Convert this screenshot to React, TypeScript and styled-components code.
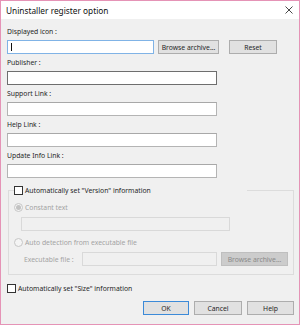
import React from "react";
import styled, { createGlobalStyle, css } from "styled-components";

const GlobalStyle = createGlobalStyle`
  html, body { margin: 0; padding: 0; background: #ffffff; }
  * { box-sizing: border-box; }
`;

const FONT = `"Noto Sans", "Open Sans", "Liberation Sans", sans-serif`;

const Window = styled.div`
  width: 300px;
  height: 325px;
  border: 1px solid #e593b6;
  background: #f0f0f0;
  display: flex;
  flex-direction: column;
  font-family: ${FONT};
  font-size: 6.8px;
  color: #262626;
`;

const TitleBar = styled.div`
  height: 18px;
  background: #ffffff;
  display: flex;
  align-items: center;
  justify-content: space-between;
  padding: 0 6px 0 5px;
  font-size: 8.3px;
  color: #111;
`;

const Body = styled.div`
  padding: 4px 5px 0 6px;
  display: flex;
  flex-direction: column;
`;

const FieldLabel = styled.div`
  height: 17px;
  line-height: 11px;
  padding-top: 3px;
  white-space: nowrap;
`;

const Edit = styled.div<{ $w: number; $tone?: "focus" | "dark" | "normal" | "disabled" }>`
  width: ${(p) => p.$w}px;
  height: 14px;
  flex: none;
  position: relative;
  background: #ffffff;
  border: 1px solid #b4b4b4;
  border-top-color: #a8a8a8;
  ${(p) =>
    p.$tone === "focus" &&
    css`
      border-color: #80b3e6;
    `}
  ${(p) =>
    p.$tone === "dark" &&
    css`
      border-color: #6e6e6e;
    `}
  ${(p) =>
    p.$tone === "disabled" &&
    css`
      background: #f0f0f0;
      border-color: #d9d9d9;
    `}
`;

const Caret = styled.span`
  position: absolute;
  left: 3px;
  top: 2px;
  width: 1px;
  height: 8px;
  background: #111;
`;

const Row = styled.div<{ $gap?: number; $mt?: number }>`
  display: flex;
  align-items: center;
  gap: ${(p) => p.$gap ?? 0}px;
  margin-top: ${(p) => p.$mt ?? 0}px;
`;

const Button = styled.div<{ $w: number; $ml?: number; $default?: boolean; $disabled?: boolean }>`
  width: ${(p) => p.$w}px;
  margin-left: ${(p) => p.$ml ?? 0}px;
  height: 14px;
  flex: none;
  border: 1px solid #adadad;
  background: #e1e1e1;
  display: flex;
  align-items: center;
  justify-content: center;
  white-space: nowrap;
  color: #262626;
  ${(p) =>
    p.$default &&
    css`
      border-color: #3c8ad8;
    `}
  ${(p) =>
    p.$disabled &&
    css`
      background: #cccccc;
      border-color: #bfbfbf;
      color: #8a8a8a;
    `}
`;

const Group = styled.fieldset`
  margin: 7px 0 0 1px;
  width: 286px;
  padding: 0 5px 8px 5px;
  border: 1px solid #dcdcdc;
  min-width: 0;
`;

const Legend = styled.legend`
  padding: 0;
  width: 233px;
  height: 10px;
`;

const Check = styled.label`
  display: flex;
  align-items: center;
  gap: 2px;
  height: 10px;
  white-space: nowrap;
`;

const Box = styled.span`
  width: 9px;
  height: 9px;
  border: 1px solid #333333;
  background: #ffffff;
  flex: none;
`;

const Radio = styled.span<{ $checked?: boolean }>`
  width: 9px;
  height: 9px;
  border-radius: 50%;
  border: 1px solid #c6c6c6;
  background: #f4f4f4;
  flex: none;
  display: flex;
  align-items: center;
  justify-content: center;
  &::after {
    content: "";
    display: ${(p) => (p.$checked ? "block" : "none")};
    width: 5px;
    height: 5px;
    border-radius: 50%;
    background: #c2c2c2;
  }
`;

const DisabledText = styled.span`
  color: #a3a3a3;
`;

const Indent = styled.div<{ $ml: number; $mt: number }>`
  margin-left: ${(p) => p.$ml}px;
  margin-top: ${(p) => p.$mt}px;
  display: flex;
  align-items: center;
`;

const ExeLabel = styled.span`
  color: #a3a3a3;
  width: 62px;
  margin-left: 10px;
  white-space: nowrap;
`;

const Footer = styled.div`
  display: flex;
  justify-content: flex-end;
  gap: 5px;
  margin-top: 8px;
`;

const CloseIcon = () => (
  <svg width="8" height="8" viewBox="0 0 8 8">
    <path d="M0.5 0.5 L7.5 7.5 M7.5 0.5 L0.5 7.5" stroke="#333" strokeWidth="0.9" fill="none" />
  </svg>
);

export default function App() {
  return (
    <>
      <GlobalStyle />
      <Window>
        <TitleBar>
          <span>Uninstaller register option</span>
          <CloseIcon />
        </TitleBar>
        <Body>
          <FieldLabel>Displayed icon :</FieldLabel>
          <Row>
            <Edit $w={147} $tone="focus">
              <Caret />
            </Edit>
            <Button $w={61} $ml={4}>Browse archive...</Button>
            <Button $w={48} $ml={10}>Reset</Button>
          </Row>
          <FieldLabel>Publisher :</FieldLabel>
          <Edit $w={210} $tone="dark" />
          <FieldLabel>Support Link :</FieldLabel>
          <Edit $w={210} />
          <FieldLabel>Help Link :</FieldLabel>
          <Edit $w={210} />
          <FieldLabel>Update Info Link :</FieldLabel>
          <Edit $w={210} />
          <Group>
            <Legend>
              <Check>
                <Box />
                <span>Automatically set "Version" information</span>
              </Check>
            </Legend>
            <Row $gap={2} $mt={8}>
              <Radio $checked />
              <DisabledText>Constant text</DisabledText>
            </Row>
            <Indent $ml={7} $mt={5}>
              <Edit $w={209} $tone="disabled" />
            </Indent>
            <Row $gap={2} $mt={7}>
              <Radio />
              <DisabledText>Auto detection from executable file</DisabledText>
            </Row>
            <Indent $ml={0} $mt={5}>
              <ExeLabel>Executable file :</ExeLabel>
              <Edit $w={135} $tone="disabled" />
              <Button $w={67} $ml={4} $disabled>Browse archive...</Button>
            </Indent>
          </Group>
          <Row $mt={8}>
            <Check>
              <Box />
              <span>Automatically set "Size" information</span>
            </Check>
          </Row>
          <Footer>
            <Button $w={46} $default>OK</Button>
            <Button $w={48}>Cancel</Button>
            <Button $w={47}>Help</Button>
          </Footer>
        </Body>
      </Window>
    </>
  );
}
